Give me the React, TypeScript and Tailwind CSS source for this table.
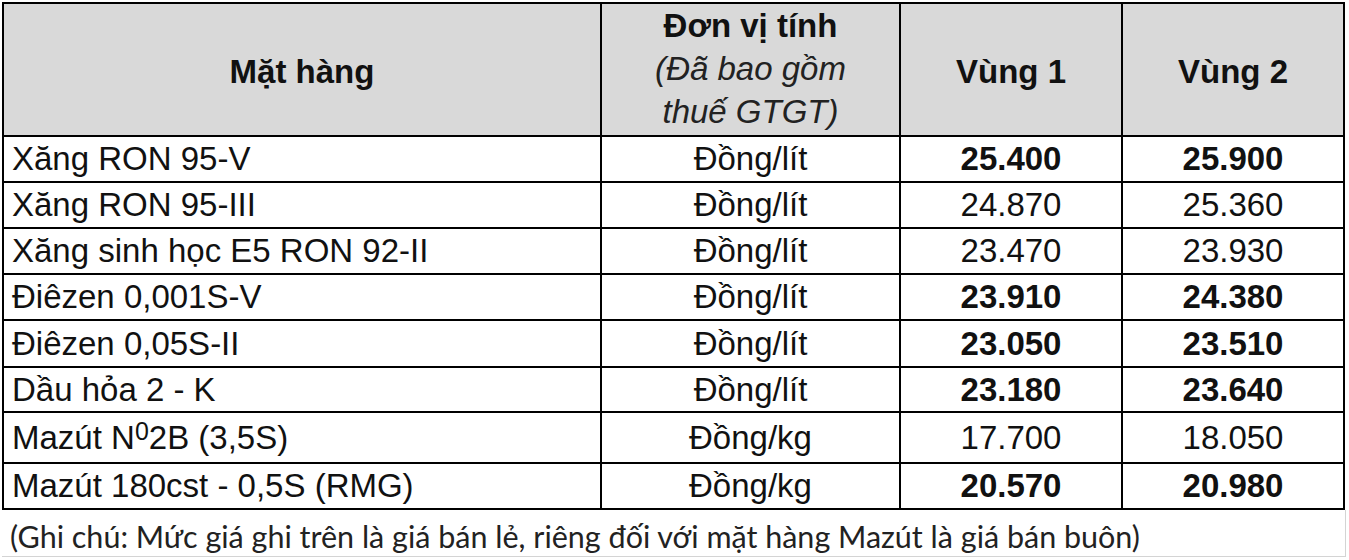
import React from "react";

type Row = { name: React.ReactNode; unit: string; v1: string; v2: string; bold: boolean; h: string };

const rows: Row[] = [
  { name: "Xăng RON 95-V", unit: "Đồng/lít", v1: "25.400", v2: "25.900", bold: true, h: "h-[44px]" },
  { name: "Xăng RON 95-III", unit: "Đồng/lít", v1: "24.870", v2: "25.360", bold: false, h: "h-[44px]" },
  { name: "Xăng sinh học E5 RON 92-II", unit: "Đồng/lít", v1: "23.470", v2: "23.930", bold: false, h: "h-[44px]" },
  { name: "Điêzen 0,001S-V", unit: "Đồng/lít", v1: "23.910", v2: "24.380", bold: true, h: "h-[44px]" },
  { name: "Điêzen 0,05S-II", unit: "Đồng/lít", v1: "23.050", v2: "23.510", bold: true, h: "h-[45px]" },
  { name: "Dầu hỏa 2 - K", unit: "Đồng/lít", v1: "23.180", v2: "23.640", bold: true, h: "h-[43px]" },
  {
    name: (
      <>
        Mazút N<sup className="text-[25px] relative top-[-9px] align-baseline">0</sup>2B (3,5S)
      </>
    ),
    unit: "Đồng/kg",
    v1: "17.700",
    v2: "18.050",
    bold: false,
    h: "h-[49px]",
  },
  { name: "Mazút 180cst - 0,5S (RMG)", unit: "Đồng/kg", v1: "20.570", v2: "20.980", bold: true, h: "h-[44px]" },
];

export default function App() {
  return (
    <div className="w-[1349px] h-[560px] bg-white overflow-hidden font-['Liberation_Sans',Arial,sans-serif] text-[#111]">
      <div className="pt-[2px] pl-[2px]">
        <div className="grid grid-cols-[596px_297px_220px_220px] gap-[2px] bg-black p-[2px] w-[1343px]">
          {/* header */}
          <div className="bg-[#d9d9d9] h-[131px] flex items-center justify-center text-[33px] font-bold pt-[4px]">
            Mặt hàng
          </div>
          <div className="bg-[#d9d9d9] h-[131px] flex flex-col items-center justify-center text-[33px] leading-[43px] pb-[2px]">
            <span className="font-bold">Đơn vị tính</span>
            <span className="italic text-[#222]">(Đã bao gồm</span>
            <span className="italic text-[#222]">thuế GTGT)</span>
          </div>
          <div className="bg-[#d9d9d9] h-[131px] flex items-center justify-center text-[33px] font-bold pt-[4px]">
            Vùng 1
          </div>
          <div className="bg-[#d9d9d9] h-[131px] flex items-center justify-center text-[33px] font-bold pt-[4px]">
            Vùng 2
          </div>
          {rows.map((r, i) => (
            <React.Fragment key={i}>
              <div className={`bg-white ${r.h} flex items-center pl-[8px] text-[33px] leading-[38px] whitespace-nowrap`}>
                <span>{r.name}</span>
              </div>
              <div className={`bg-white ${r.h} flex items-center justify-center text-[33px] leading-[38px]`}>
                {r.unit}
              </div>
              <div
                className={`bg-white ${r.h} flex items-center justify-center text-[33px] leading-[38px] ${
                  r.bold ? "font-bold" : ""
                }`}
              >
                {r.v1}
              </div>
              <div
                className={`bg-white ${r.h} flex items-center justify-center text-[33px] leading-[38px] ${
                  r.bold ? "font-bold" : ""
                }`}
              >
                {r.v2}
              </div>
            </React.Fragment>
          ))}
        </div>
        <div className="w-[1344px] h-[47px] border-b border-r border-[#d4d4d4] flex items-end pl-[8px] pb-[1px]">
          <span className="font-['Lato','Noto_Sans',sans-serif] text-[30.5px] leading-[38px] text-[#222] whitespace-nowrap">
            (Ghi chú: Mức giá ghi trên là giá bán lẻ, riêng đối với mặt hàng Mazút là giá bán buôn)
          </span>
        </div>
      </div>
    </div>
  );
}
